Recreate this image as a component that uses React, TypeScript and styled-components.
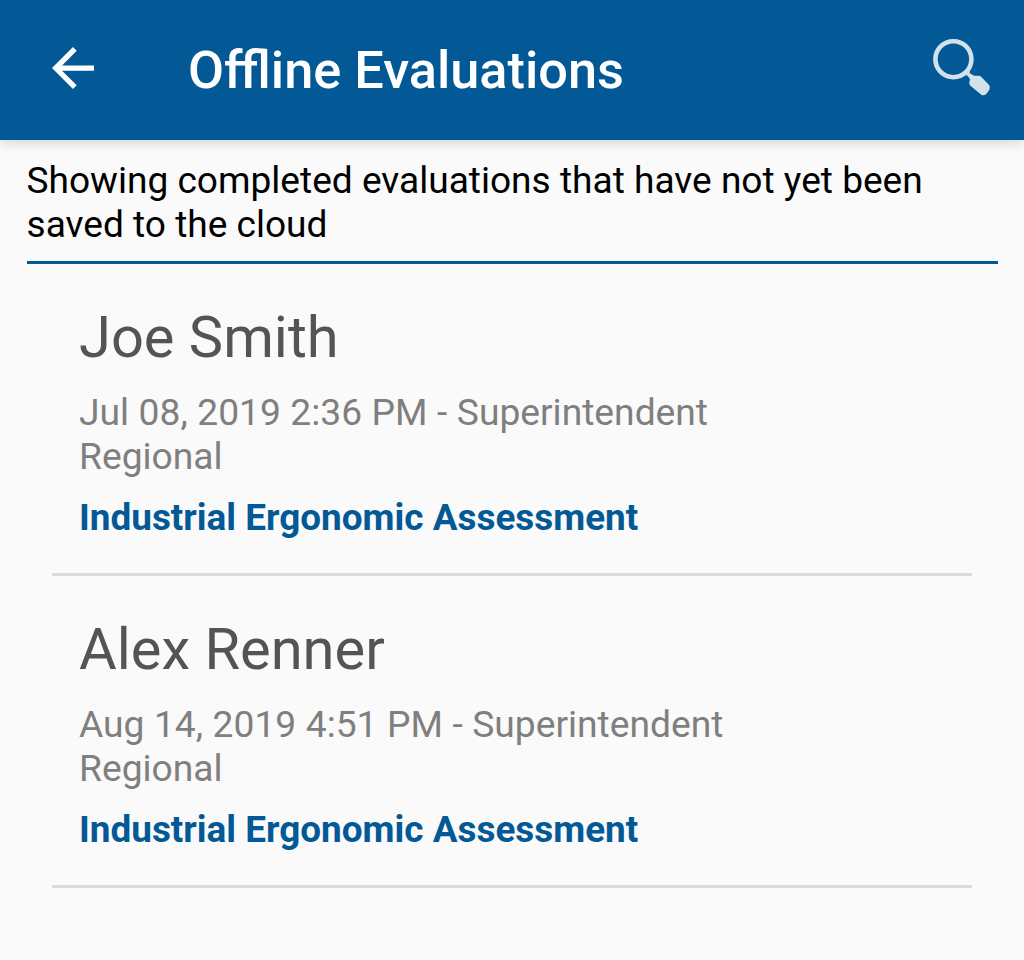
import React from "react";
import styled, { createGlobalStyle } from "styled-components";

const GlobalStyle = createGlobalStyle`
  * { box-sizing: border-box; }
  body { margin: 0; background: #fafafa; font-family: Roboto, "Liberation Sans", sans-serif; }
`;

const Screen = styled.div`
  width: 1024px;
  height: 960px;
  overflow: hidden;
  background: #fafafa;
`;

const AppBar = styled.header`
  display: flex;
  align-items: center;
  height: 140px;
  padding: 0 32px 0 52px;
  background: #035996;
  box-shadow: 0 2px 12px rgba(0, 0, 0, 0.17);
`;

const Title = styled.h1`
  flex: 1;
  margin: 0 0 0 94px;
  color: #fff;
  font-size: 52.3px;
  font-weight: 500;
  line-height: 60px;
  white-space: nowrap;
`;

const IconButton = styled.button`
  display: flex;
  margin: 0 0 5px;
  padding: 0;
  border: 0;
  background: none;
`;

const Notice = styled.p`
  height: 124px;
  margin: 0 26.5px;
  padding: 19px 0 0;
  border-bottom: 3px solid #035996;
  color: #000;
  font-size: 37.1px;
  line-height: 44px;
  white-space: nowrap;
`;

const List = styled.ul`
  margin: 0 52px;
  padding: 0;
  list-style: none;
`;

const Item = styled.li`
  height: 312px;
  padding: 40px 27px 0;
  border-bottom: 3px solid #dadada;
  white-space: nowrap;
`;

const Name = styled.h2`
  margin: 0;
  color: #545454;
  font-size: 57.8px;
  font-weight: 400;
  line-height: 67px;
`;

const Details = styled.p`
  margin: 19px 0 0;
  color: #7f7f7f;
  font-size: 37.2px;
  line-height: 44px;
  word-spacing: 0.3px;
`;

const Assessment = styled.p`
  margin: 18px 0 0;
  color: #035996;
  font-size: 36.9px;
  font-weight: 700;
  line-height: 44px;
`;

const evaluations = [
  { name: "Joe Smith", date: "Jul 08, 2019 2:36 PM" },
  { name: "Alex Renner", date: "Aug 14, 2019 4:51 PM" },
];

export default function App() {
  return (
    <Screen>
      <GlobalStyle />
      <AppBar>
        <IconButton aria-label="Back">
          <svg width="42" height="42" viewBox="4 4 16 16" fill="#fff">
            <path d="M20 11H7.83l5.59-5.59L12 4l-8 8 8 8 1.41-1.41L7.83 13H20v-2z" />
          </svg>
        </IconButton>
        <Title>Offline Evaluations</Title>
        <IconButton aria-label="Search">
          <svg width="60" height="60" viewBox="0 0 60 60" fill="#d3e1eb">
            <circle cx="21.4" cy="21.2" r="18" fill="none" stroke="#d3e1eb" strokeWidth="4.6" />
            <path d="M31.5 36.5l6-6 .2 4.8 4.6 2.4h5q1 .2 1.8 1l8 8.4q1.7 2.2.2 5l-3 3.9q-2.6 2.2-5 .7L38.4 47.7q-1.6-1.6-1.1-3.4l.7-3-2.4-3.5z" />
          </svg>
        </IconButton>
      </AppBar>
      <Notice>
        Showing completed evaluations that have not yet been
        <br />
        saved to the cloud
      </Notice>
      <List>
        {evaluations.map((e) => (
          <Item key={e.name}>
            <Name>{e.name}</Name>
            <Details>
              {e.date} - Superintendent
              <br />
              Regional
            </Details>
            <Assessment>Industrial Ergonomic Assessment</Assessment>
          </Item>
        ))}
      </List>
    </Screen>
  );
}
